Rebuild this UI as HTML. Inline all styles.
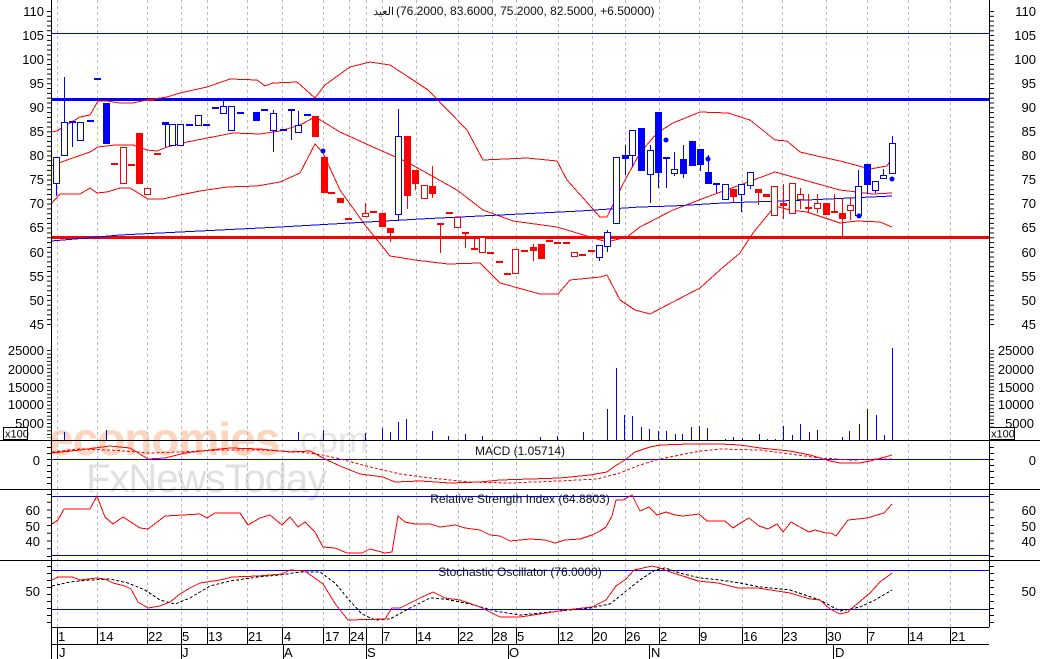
<!DOCTYPE html>
<html><head><meta charset="utf-8"><style>
html,body{margin:0;padding:0;background:#fff;}
svg{display:block;font-family:"Liberation Sans","Noto Sans CJK SC",sans-serif;}
.H{fill:#fff;stroke:#00f;stroke-width:1}
.F{fill:#00f}
.h{fill:#fff;stroke:#f00;stroke-width:1}
.f{fill:#f00}
.lb{font-size:13px;fill:#000}
</style></head><body>
<svg width="1040" height="659" viewBox="0 0 1040 659" xmlns="http://www.w3.org/2000/svg" shape-rendering="crispEdges">
<defs>
<pattern id="tp" width="10" height="4.815" patternUnits="userSpaceOnUse" x="0" y="11"><rect width="10" height="1" fill="#000"/></pattern>
<pattern id="tv" width="10" height="3.65" patternUnits="userSpaceOnUse" x="0" y="350"><rect width="10" height="1" fill="#000"/></pattern>
<pattern id="tm" width="10" height="6" patternUnits="userSpaceOnUse" x="0" y="447"><rect width="10" height="1" fill="#000"/></pattern>
<pattern id="tr" width="10" height="7.75" patternUnits="userSpaceOnUse" x="0" y="494"><rect width="10" height="1" fill="#000"/></pattern>
<pattern id="ts" width="10" height="7" patternUnits="userSpaceOnUse" x="0" y="566"><rect width="10" height="1" fill="#000"/></pattern>
</defs>

<!-- watermark -->
<text x="48" y="455" font-size="46" font-weight="bold" fill="#fcd5bf" letter-spacing="-1">economies</text>
<text x="290" y="452" font-size="36" fill="#e6e6e6">.com</text>
<text x="86" y="492" font-size="40" fill="#e0e0e0" letter-spacing="-1">FxNewsToday</text>

<!-- vertical dashed grid -->
<g stroke="#bbb" stroke-dasharray="3,3" stroke-width="1">
<path d="M57.5 0V627M97.5 0V627M147.5 0V627M181.5 0V627M207.5 0V627M247.5 0V627M282.5 0V627M323.5 0V627M349.5 0V627M366.5 0V627M382.5 0V627M416.5 0V627M458.5 0V627M492.5 0V627M516.5 0V627M558.5 0V627M592.5 0V627M625.5 0V627M659.5 0V627M699.5 0V627M742.5 0V627M782.5 0V627M826.5 0V627M867.5 0V627M908.5 0V627M950.5 0V627"/>
</g>

<!-- horizontal lines -->
<line x1="51" y1="33.5" x2="989" y2="33.5" stroke="#00f" stroke-width="1"/>
<line x1="51" y1="99.5" x2="989" y2="99.5" stroke="#00f" stroke-width="3"/>
<line x1="51" y1="237.5" x2="989" y2="237.5" stroke="#f00" stroke-width="3"/>

<!-- bollinger -->
<g fill="none" stroke="#f00" stroke-width="1">
<polyline points="51,132 57,131 63,127 80,117 90,115 98,101 107,101 120,103 133,103 147,100 167,97 180,93 207,87 230,79 257,80 265,86 273,83 297,82 315,98 325,85 350,67 370,62 390,65 410,78 428,90 467,130 483,160 527,158 557,161 567,180 600,217 607,217 625,180 640,153 657,133 673,123 700,112 728,113 750,120 775,140 787,141 800,152 817,156 840,161 870,169 887,166 892,158"/>
<polyline points="51,166 67,160 90,152 98,147 115,145 133,145 147,150 157,151 167,147 187,142 233,133 260,134 280,131 300,125 315,117 322,121 340,132 373,147 407,162 457,190 483,210 513,221 557,227 607,242 627,237 640,227 673,210 707,197 740,185 775,172 793,177 840,190 873,194 892,193"/>
<polyline points="51,204 60,194 80,194 90,188 97,193 107,192 120,188 130,188 148,199 163,199 180,195 200,191 227,187 257,186 280,182 300,173 315,144 323,153 340,190 365,225 390,256 415,260 448,264 480,263 500,283 540,294 558,294 570,280 600,277 607,275 620,300 635,310 650,314 673,302 700,288 720,270 740,253 753,233 775,206 790,210 807,212 840,223 857,221 880,222 892,227"/>
</g>
<polyline fill="none" stroke="#00f" stroke-width="1" points="51,241 87,238 120,235 200,231 280,227 350,223 420,219 500,215 580,211 640,207 673,206 723,203 807,200 892,196"/>

<!-- wicks -->
<path fill="none" stroke="#00f" d="M56.5 157V196M64.5 77V155M72.5 121V147M165.5 122V147M223.5 101V113M273.5 110V152M291.5 110V140M298.5 111V132M398.5 109V221M599.5 245V261M607.5 230V252M625.5 145V175M632.5 130V167M650.5 145V203M658.5 112V188M666.5 158V188M674.5 152V176M683.5 145V178M700.5 149V171M708.5 155V184M716.5 184V193M741.5 184V212M750.5 172V189M858.5 170V215M867.5 164V194M875.5 181V193M883.5 169V178M892.5 136V173"/>
<path fill="none" stroke="#f00" d="M365.5 203V215M390.5 228V242M407.5 136V209M415.5 170V190M432.5 166V198M440.5 223V253M465.5 233V248M474.5 236V250M533.5 244V261M733.5 189V202M758.5 189V205M783.5 184V219M800.5 188V209M808.5 194V212M817.5 194V213M834.5 194V212M842.5 198V237M850.5 197V220"/>
<path fill="none" stroke="#00f" stroke-width="2" d="M69 122h7M87 121h7M94 79h7M186 125h7M203 125h7M212 108h7M237 113h7M261 110h7M280 130h7M288 110h7M304 115h7M663 158h7M713 184h7"/>
<path fill="none" stroke="#f00" stroke-width="2" d="M111 164h7M128 165h7M146 100h8M154 154h7M328 193h7M345 219h7M370 212h7M446 213h7M462 233h7M504 274h7M521 251h7M546 241h7M554 243h7M563 243h7M579 255h7M588 251h7M831 212h7"/>

<!-- bodies -->
<g>
<rect class="H" x="53.5" y="157.5" width="6" height="26"/>
<rect class="H" x="61.5" y="122.5" width="6" height="33"/>
<rect class="H" x="77.5" y="122.5" width="6" height="18"/>
<rect class="F" x="103" y="103" width="7" height="41"/>
<rect class="h" x="120.5" y="147.5" width="6" height="36"/>
<rect class="f" x="136" y="133" width="7" height="51"/>
<rect class="h" x="144.5" y="188.5" width="6" height="6"/>
<rect class="F" x="162" y="122" width="7" height="3"/>
<rect class="H" x="169.5" y="124.5" width="6" height="21"/>
<rect class="H" x="177.5" y="124.5" width="6" height="21"/>
<rect class="H" x="195.5" y="115.5" width="6" height="10"/>
<rect class="H" x="220.5" y="106.5" width="6" height="7"/>
<rect class="H" x="228.5" y="106.5" width="6" height="24"/>
<rect class="F" x="253" y="112" width="7" height="9"/>
<rect class="H" x="270.5" y="113.5" width="6" height="17"/>
<rect class="H" x="295.5" y="125.5" width="6" height="7"/>
<rect class="f" x="312" y="116" width="7" height="21"/>
<rect class="f" x="321" y="157" width="7" height="36"/>
<rect class="f" x="337" y="198" width="7" height="5"/>
<rect class="h" x="362.5" y="213.5" width="6" height="3"/>
<rect class="f" x="379" y="213" width="7" height="14"/>
<rect class="f" x="387" y="228" width="7" height="5"/>
<rect class="H" x="395.5" y="136.5" width="6" height="78"/>
<rect class="f" x="404" y="136" width="7" height="60"/>
<rect class="f" x="412" y="170" width="7" height="14"/>
<rect class="h" x="421.5" y="185.5" width="6" height="13"/>
<rect class="f" x="429" y="186" width="7" height="8"/>
<rect class="f" x="437" y="223" width="7" height="2"/>
<rect class="h" x="454.5" y="217.5" width="6" height="10"/>
<rect class="f" x="471" y="248" width="7" height="2"/>
<rect class="h" x="479.5" y="237.5" width="6" height="15"/>
<rect class="f" x="487" y="252" width="7" height="2"/>
<rect class="f" x="496" y="261" width="7" height="2"/>
<rect class="h" x="512.5" y="249.5" width="6" height="24"/>
<rect class="f" x="530" y="247" width="7" height="4"/>
<rect class="f" x="538" y="244" width="7" height="15"/>
<rect class="h" x="571.5" y="252.5" width="6" height="4"/>
<rect class="H" x="596.5" y="245.5" width="6" height="12"/>
<rect class="H" x="604.5" y="232.5" width="6" height="14"/>
<rect class="H" x="613.5" y="157.5" width="6" height="66"/>
<rect class="F" x="622" y="155" width="7" height="4"/>
<rect class="H" x="629.5" y="130.5" width="6" height="25"/>
<rect class="F" x="638" y="128" width="7" height="43"/>
<rect class="H" x="647.5" y="150.5" width="6" height="24"/>
<rect class="F" x="655" y="112" width="7" height="61"/>
<rect class="H" x="671.5" y="169.5" width="6" height="4"/>
<rect class="F" x="680" y="159" width="7" height="15"/>
<rect class="F" x="689" y="141" width="7" height="25"/>
<rect class="F" x="697" y="149" width="7" height="16"/>
<rect class="F" x="705" y="172" width="7" height="12"/>
<rect class="H" x="722.5" y="184.5" width="6" height="15"/>
<rect class="f" x="730" y="189" width="7" height="8"/>
<rect class="H" x="738.5" y="184.5" width="6" height="10"/>
<rect class="H" x="747.5" y="172.5" width="6" height="13"/>
<rect class="f" x="755" y="189" width="7" height="4"/>
<rect class="f" x="763" y="194" width="7" height="3"/>
<rect class="h" x="771.5" y="186.5" width="6" height="29"/>
<rect class="f" x="780" y="203" width="7" height="3"/>
<rect class="h" x="789.5" y="183.5" width="6" height="30"/>
<rect class="h" x="797.5" y="194.5" width="6" height="5"/>
<rect class="f" x="805" y="207" width="7" height="2"/>
<rect class="h" x="814.5" y="203.5" width="6" height="5"/>
<rect class="f" x="823" y="203" width="7" height="12"/>
<rect class="f" x="839" y="213" width="7" height="6"/>
<rect class="h" x="847.5" y="205.5" width="6" height="5"/>
<rect class="H" x="855.5" y="186.5" width="6" height="29"/>
<rect class="F" x="864" y="164" width="7" height="21"/>
<rect class="H" x="872.5" y="181.5" width="6" height="9"/>
<rect class="H" x="880.5" y="175.5" width="6" height="3"/>
<rect class="H" x="889.5" y="143.5" width="6" height="30"/>
</g>
<g fill="#00f" shape-rendering="auto">
<circle cx="323" cy="151" r="2.5"/><circle cx="666" cy="140" r="2.5"/><circle cx="708" cy="159" r="2.5"/><circle cx="859" cy="216" r="2.5"/><circle cx="892" cy="179" r="2.5"/>
</g>

<text x="394" y="15" text-anchor="end" font-size="11" fill="#111">العيد</text>
<text x="396" y="15" font-size="12" fill="#111">(76.2000, 83.6000, 75.2000, 82.5000, +6.50000)</text>

<!-- volume -->
<path fill="none" stroke="#00f" stroke-width="1" d="M64.5 440V432M106.5 440V430M298.5 440V432M323.5 440V430M365.5 440V433M382.5 440V428M390.5 440V432M398.5 440V422M406.5 440V419M432.5 440V431M448.5 440V436M465.5 440V434M482.5 440V436M540.5 440V437M557.5 440V436M583.5 440V432M607.5 440V409M616.5 440V368M624.5 440V415M632.5 440V416M641.5 440V427M649.5 440V429M658.5 440V431M666.5 440V431M675.5 440V434M682.5 440V434M691.5 440V427M699.5 440V426M707.5 440V428M725.5 440V439M733.5 440V437M742.5 440V438M759.5 440V434M767.5 440V439M775.5 440V439M783.5 440V426M792.5 440V435M800.5 440V424M809.5 440V432M817.5 440V430M842.5 440V437M849.5 440V431M859.5 440V424M867.5 440V409M876.5 440V415M884.5 440V435M892.5 440V348"/>

<!-- MACD -->
<line x1="51" y1="459.5" x2="989" y2="459.5" stroke="#00f"/>
<polyline fill="none" stroke="#f00" points="52,453 80,450 110,446 130,448 148,459 165,458 185,453 210,450 230,448 260,449 290,452 310,451 325,459 340,466 360,474 383,477 395,482 420,481 450,483 480,482 500,480 530,479 560,478 590,475 607,472 615,466 625,460 635,452 650,447 660,445 690,444 720,444 740,445 760,448 790,451 810,455 830,461 840,463 860,463 870,461 885,457 892,455"/>
<polyline fill="none" stroke="#f00" stroke-dasharray="3,2" points="52,452 80,449 110,450 150,453 180,452 220,450 260,450 300,452 323,455 340,459 370,467 400,474 430,478 470,482 510,483 560,481 597,479 620,473 640,465 660,459 680,455 700,451 720,449 760,450 790,454 820,458 850,460 880,459 892,459"/>
<text x="520" y="455" text-anchor="middle" font-size="12" fill="#111">MACD (1.05714)</text>

<!-- RSI -->
<line x1="51" y1="496.5" x2="989" y2="496.5" stroke="#00f"/>
<line x1="51" y1="555.5" x2="989" y2="555.5" stroke="#00f"/>
<polyline fill="none" stroke="#f00" points="52,524 58,520 64,509 90,509 97,496 105,517 113,524 123,517 140,528 148,529 165,516 200,514 207,518 215,513 240,513 248,525 260,518 270,515 282,525 290,517 298,527 305,522 315,532 323,547 335,548 347,553 362,553 370,549 385,553 392,552 398,516 405,522 415,524 430,524 440,527 455,525 465,528 480,530 490,535 500,536 510,541 520,540 530,539 545,540 555,543 565,540 580,539 592,535 600,531 606,527 612,516 616,500 623,500 632,495 640,511 649,507 657,515 666,512 675,515 683,516 699,514 707,521 725,521 733,528 742,522 749,518 759,526 768,529 777,524 783,532 791,522 800,527 809,532 815,530 826,533 831,533 836,536 848,520 858,519 867,518 884,513 892,504"/>
<text x="520" y="503" text-anchor="middle" font-size="12" fill="#111">Relative Strength Index (64.8803)</text>

<!-- Stoch -->
<line x1="51" y1="570.5" x2="989" y2="570.5" stroke="#00f"/>
<line x1="51" y1="609.5" x2="989" y2="609.5" stroke="#00f"/>
<polyline fill="none" stroke="#000" stroke-dasharray="3,2" points="52,586 70,582 90,580 110,579 128,583 145,590 160,600 175,604 190,598 210,586 230,581 258,577 280,575 300,572 320,572 335,583 350,601 362,614 375,620 390,619 410,608 430,598 445,599 470,604 495,611 520,615 560,611 590,608 610,604 625,592 640,580 655,570 665,568 680,573 700,578 720,580 740,583 760,587 790,590 820,600 840,611 860,607 875,600 892,590"/>
<polyline fill="none" stroke="#f00" points="52,580 58,577 72,577 80,580 97,578 105,579 113,583 125,586 131,589 138,602 148,608 160,606 170,602 180,594 190,588 200,583 220,580 232,577 258,576 282,574 290,570 305,571 323,584 336,605 348,620 385,619 392,608 400,608 420,598 433,592 445,598 460,600 480,607 500,617 520,617 540,614 565,610 592,607 606,600 616,586 626,579 634,570 652,566 660,568 670,572 686,577 698,581 718,583 738,588 758,588 790,593 810,599 820,600 830,609 840,614 848,612 858,603 870,593 880,582 892,573"/>
<text x="520" y="576" text-anchor="middle" font-size="12" fill="#111">Stochastic Oscillator (76.0000)</text>

<!-- panel separators & axes -->
<g stroke="#000" stroke-width="1">
<line x1="0" y1="440.5" x2="1040" y2="440.5"/>
<line x1="0" y1="489.5" x2="1040" y2="489.5"/>
<line x1="0" y1="560.5" x2="1040" y2="560.5"/>
<line x1="51" y1="627.5" x2="989" y2="627.5"/>
<line x1="51" y1="644.5" x2="989" y2="644.5"/>
<line x1="51.5" y1="0" x2="51.5" y2="659"/>
<line x1="989.5" y1="0" x2="989.5" y2="627"/>
</g>
<!-- ticks -->
<rect x="47" y="11" width="4" height="315" fill="url(#tp)"/>
<rect x="990" y="11" width="4" height="315" fill="url(#tp)"/>
<rect x="47" y="350" width="4" height="88" fill="url(#tv)"/>
<rect x="990" y="350" width="4" height="88" fill="url(#tv)"/>
<rect x="47" y="447" width="4" height="40" fill="url(#tm)"/>
<rect x="990" y="447" width="4" height="40" fill="url(#tm)"/>
<rect x="47" y="494" width="4" height="64" fill="url(#tr)"/>
<rect x="990" y="494" width="4" height="64" fill="url(#tr)"/>
<rect x="47" y="566" width="4" height="60" fill="url(#ts)"/>
<rect x="990" y="566" width="4" height="60" fill="url(#ts)"/>

<g class="lb" text-anchor="end" font-size="13">
<text x="44" y="16">110</text><text x="44" y="40">105</text><text x="44" y="64">100</text><text x="44" y="88">95</text><text x="44" y="112">90</text><text x="44" y="136">85</text><text x="44" y="160">80</text><text x="44" y="184">75</text><text x="44" y="208">70</text><text x="44" y="232">65</text><text x="44" y="257">60</text><text x="44" y="281">55</text><text x="44" y="305">50</text><text x="44" y="329">45</text>
<text x="1036" y="16">110</text><text x="1036" y="40">105</text><text x="1036" y="64">100</text><text x="1036" y="88">95</text><text x="1036" y="112">90</text><text x="1036" y="136">85</text><text x="1036" y="160">80</text><text x="1036" y="184">75</text><text x="1036" y="208">70</text><text x="1036" y="232">65</text><text x="1036" y="257">60</text><text x="1036" y="281">55</text><text x="1036" y="305">50</text><text x="1036" y="329">45</text>
<text x="44" y="355">25000</text><text x="44" y="374">20000</text><text x="44" y="392">15000</text><text x="44" y="409">10000</text><text x="44" y="428">5000</text>
<text x="1034" y="355">25000</text><text x="1034" y="374">20000</text><text x="1034" y="392">15000</text><text x="1034" y="409">10000</text><text x="1034" y="428">5000</text>
<text x="40" y="465">0</text><text x="1036" y="465">0</text>
<text x="40" y="515">60</text><text x="40" y="531">50</text><text x="40" y="546">40</text>
<text x="1036" y="515">60</text><text x="1036" y="531">50</text><text x="1036" y="546">40</text>
<text x="40" y="596">50</text><text x="1036" y="596">50</text>
</g>
<rect x="3.5" y="427.5" width="24" height="12" fill="#fff" stroke="#000"/>
<text x="5" y="437.5" font-size="11" fill="#000">x100</text>
<rect x="989.5" y="427.5" width="25" height="12" fill="#fff" stroke="#000"/>
<text x="991" y="437.5" font-size="11" fill="#000">x100</text>

<!-- date axis -->
<path stroke="#000" d="M57.5 627V644M97.5 627V644M147.5 627V644M181.5 627V644M207.5 627V644M247.5 627V644M282.5 627V644M323.5 627V644M349.5 627V644M366.5 627V644M382.5 627V644M416.5 627V644M458.5 627V644M492.5 627V644M516.5 627V644M558.5 627V644M592.5 627V644M625.5 627V644M659.5 627V644M699.5 627V644M742.5 627V644M782.5 627V644M826.5 627V644M867.5 627V644M908.5 627V644M950.5 627V644M57.5 644V659M181.5 644V659M283.5 644V659M366.5 644V659M508.5 644V659M649.5 644V659M833.5 644V659"/>
<g class="lb" font-size="13">
<text x="58" y="641">1</text><text x="99" y="641">14</text><text x="148" y="641">22</text><text x="182" y="641">5</text><text x="208" y="641">13</text><text x="248" y="641">21</text><text x="284" y="641">4</text><text x="325" y="641">17</text><text x="350" y="641">24</text><text x="383" y="641">7</text><text x="417" y="641">14</text><text x="459" y="641">22</text><text x="493" y="641">28</text><text x="517" y="641">5</text><text x="559" y="641">12</text><text x="593" y="641">20</text><text x="626" y="641">26</text><text x="660" y="641">2</text><text x="700" y="641">9</text><text x="743" y="641">16</text><text x="783" y="641">23</text><text x="827" y="641">30</text><text x="868" y="641">7</text><text x="909" y="641">14</text><text x="951" y="641">21</text>
<text x="59" y="657">J</text><text x="182" y="657">J</text><text x="284" y="657">A</text><text x="367" y="657">S</text><text x="509" y="657">O</text><text x="651" y="657">N</text><text x="835" y="657">D</text>
</g>
</svg>
</body></html>
